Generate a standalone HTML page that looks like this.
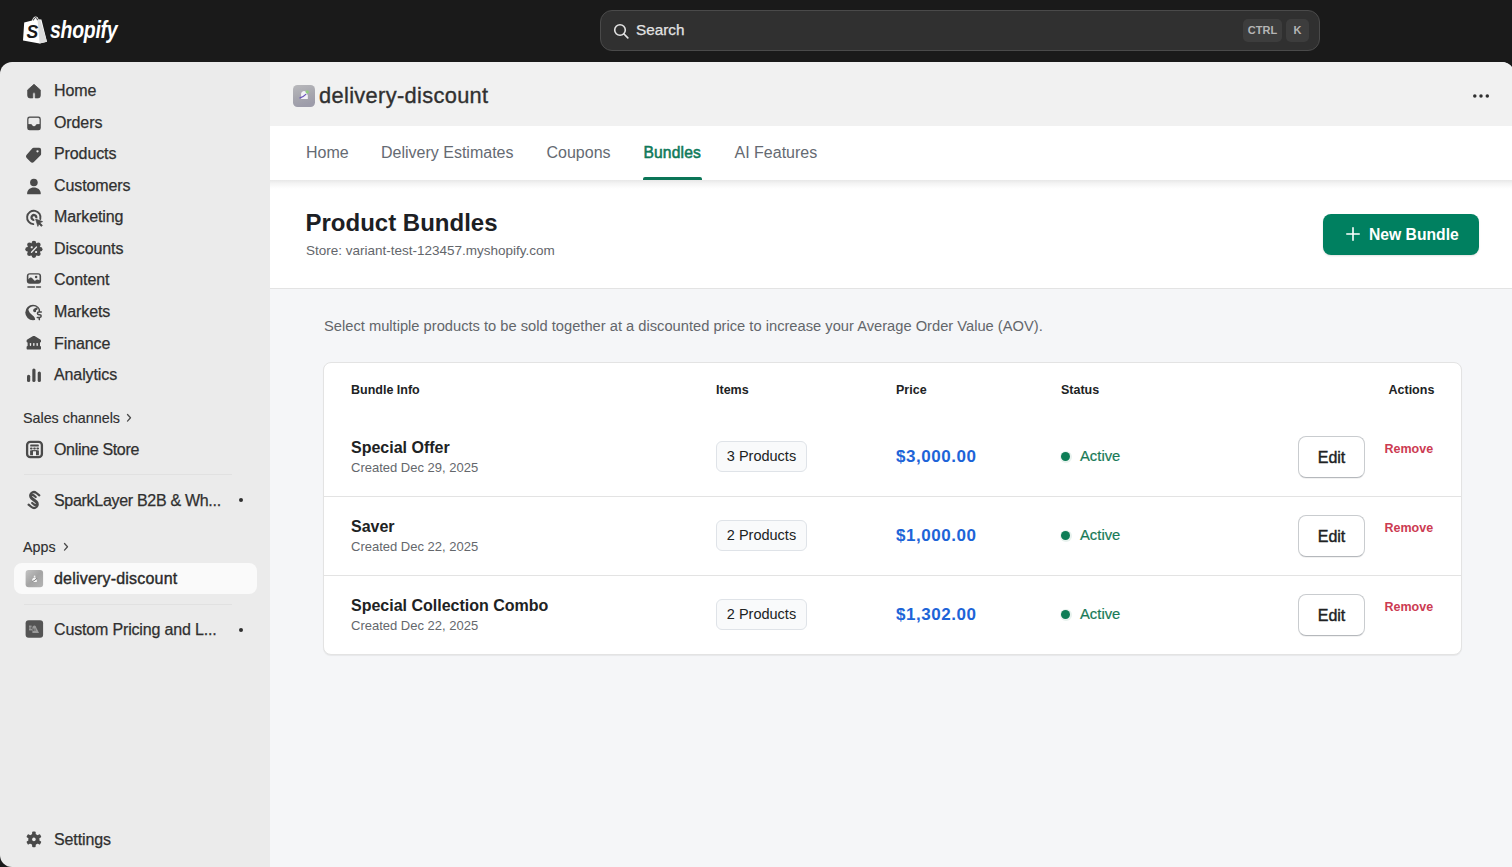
<!DOCTYPE html>
<html><head><meta charset="utf-8">
<style>
*{box-sizing:border-box;margin:0;padding:0}
html,body{width:1512px;height:867px;overflow:hidden;background:#1a1a1a;font-family:"Liberation Sans",sans-serif;}
.a{position:absolute;white-space:nowrap;line-height:1}
#search{position:absolute;left:600px;top:10px;width:720px;height:41px;background:#303030;border:1px solid #4a4a4a;border-radius:12px}
.kbd{position:absolute;top:8px;height:23px;background:#3d3d3d;border-radius:5px;color:#b5b5b5;font-size:11px;font-weight:bold;line-height:23px;text-align:center}
#side{position:absolute;left:0;top:62px;width:270px;height:805px;background:#ebebeb;border-radius:12px 0 0 12px}
#main{position:absolute;left:270px;top:62px;width:1244px;height:805px;background:#f5f6f8;border-radius:0 12px 0 0;overflow:hidden}
.nt{position:absolute;left:54px;color:#303030;font-size:16px;letter-spacing:-0.1px;line-height:1;-webkit-text-stroke:0.25px #303030;white-space:nowrap}
.ni{position:absolute;left:24px;width:20px;height:20px}
.th{position:absolute;color:#202223;font-size:12.5px;font-weight:bold;line-height:1;white-space:nowrap}
.ttl{position:absolute;left:351px;color:#202223;font-size:16px;font-weight:bold;line-height:1;white-space:nowrap}
.crt{position:absolute;left:351px;color:#64676c;font-size:13px;line-height:1;white-space:nowrap}
.badge{position:absolute;left:716px;width:91px;height:31px;border:1px solid #dfe3e8;background:#f9fafb;border-radius:6px;color:#202223;font-size:14.5px;line-height:29px;text-align:center}
.price{position:absolute;left:896px;color:#1d64d8;font-size:17px;letter-spacing:0.55px;font-weight:bold;line-height:1;white-space:nowrap}
.dot{position:absolute;left:1059.5px;width:12px;height:12px;border-radius:50%;background:#e8f2ee}
.dot::after{content:"";position:absolute;left:1.5px;top:1.5px;width:9px;height:9px;border-radius:50%;background:#0d7d56}
.act{position:absolute;left:1080px;color:#187a57;font-size:14.8px;-webkit-text-stroke:0.2px #187a57;line-height:1;white-space:nowrap}
.edit{position:absolute;left:1298px;width:67px;height:42px;border:1px solid #c9cccf;border-bottom-color:#b5b8bc;border-radius:8px;background:#fff;color:#202223;font-size:16px;-webkit-text-stroke:0.4px #202223;line-height:41px;text-align:center;box-shadow:0 1px 0 rgba(0,0,0,0.05)}
.rm{position:absolute;left:1384.5px;color:#cc3b52;font-size:12.5px;font-weight:bold;line-height:1;white-space:nowrap}
.tab{top:144.7px;color:#656a72;font-size:16px}
.sep{position:absolute;left:324px;width:1137px;height:1px;background:#e3e3e3}
</style></head><body>
<!-- TOP BAR -->
<svg class="a" style="left:22px;top:16px" width="26" height="28" viewBox="0 0 26 28">
  <path d="M2.2 6.6 L10 4.6 C10.8 1.8 12.2 0.6 13.6 0.6 C15.2 0.6 16.2 1.8 16.6 3.6 L19.4 3.4 L25 25.8 L17.6 27.4 L1 24.6 Z" fill="#fff"/>
  <path d="M18.2 3.5 L25 25.8 L17.6 27.4 L15.6 4.4 Z" fill="#dcdcdc"/>
  <path d="M11.4 4.4 C12 2.4 12.8 1.6 13.6 1.6 C14.6 1.6 15.2 2.6 15.4 4.2" stroke="#1a1a1a" stroke-width="1" fill="none"/>
  <text x="4.6" y="22" font-family="Liberation Sans" font-weight="bold" font-style="italic" font-size="17.5" fill="#1a1a1a">S</text>
</svg>
<div class="a" style="left:50px;top:19px;color:#fff;font-size:19.5px;font-weight:bold;font-style:italic;letter-spacing:-0.3px;transform:scale(1,1.2);transform-origin:0 0">shopify</div>
<div id="search">
  <svg class="a" style="left:12px;top:12px" width="17" height="17" viewBox="0 0 17 17"><circle cx="7" cy="7" r="5.3" stroke="#e3e3e3" stroke-width="1.6" fill="none"/><path d="M11 11 L14.8 14.8" stroke="#e3e3e3" stroke-width="1.7" stroke-linecap="round"/></svg>
  <div class="a" style="left:35px;top:11.4px;color:#e3e3e3;font-size:15.3px;-webkit-text-stroke:0.25px #e3e3e3">Search</div>
  <div class="kbd" style="left:642px;width:39px">CTRL</div>
  <div class="kbd" style="left:685px;width:23px">K</div>
</div>

<!-- SIDEBAR -->
<div id="side"></div>
<div id="sidecontent">
<!-- Home -->
<svg class="ni" style="top:80.5px" viewBox="0 0 20 20"><path d="M10 3.3 L16.3 8.9 V14.7 A2.2 2.2 0 0 1 14.1 16.9 H11.2 V12.8 A1.2 1.2 0 0 0 8.8 12.8 V16.9 H5.9 A2.2 2.2 0 0 1 3.7 14.7 V8.9 Z" fill="#4a4a4a" stroke="#4a4a4a" stroke-width="0.8" stroke-linejoin="round"/></svg>
<div class="nt" style="top:82.5px">Home</div>
<!-- Orders -->
<svg class="ni" style="top:112.5px" viewBox="0 0 20 20"><path d="M5.6 3.5 H14.4 A2.4 2.4 0 0 1 16.8 5.9 V14.9 A2.4 2.4 0 0 1 14.4 17.3 H5.6 A2.4 2.4 0 0 1 3.2 14.9 V5.9 A2.4 2.4 0 0 1 5.6 3.5 Z" fill="#4a4a4a"/><path d="M6 4.9 H14 A1.4 1.4 0 0 1 15.4 6.3 V10.9 H12.6 L10.9 13 H9.1 L7.4 10.9 H4.6 V6.3 A1.4 1.4 0 0 1 6 4.9 Z" fill="#ebebeb" stroke="#ebebeb" stroke-width="0.3" stroke-linejoin="round"/></svg>
<div class="nt" style="top:114.5px">Orders</div>
<!-- Products -->
<svg class="ni" style="top:143.5px" viewBox="0 0 20 20"><path d="M9.6 3.8 H15.2 A1.9 1.9 0 0 1 17.1 5.7 V10.1 C17.1 10.6 16.9 11 16.6 11.3 L10.1 17.7 A2.6 2.6 0 0 1 6.4 17.7 L2.9 14.2 A2.6 2.6 0 0 1 2.9 10.5 L8.4 4.3 C8.7 4 9.1 3.8 9.6 3.8 Z" fill="#4a4a4a"/><circle cx="13.5" cy="7.3" r="1.15" fill="#ebebeb"/></svg>
<div class="nt" style="top:145.5px">Products</div>
<!-- Customers -->
<svg class="ni" style="top:175.5px" viewBox="0 0 20 20"><circle cx="9.9" cy="6.5" r="3.8" fill="#4a4a4a"/><path d="M3.1 17.4 C3.3 13.8 6.1 11.6 9.9 11.6 C13.7 11.6 16.5 13.8 16.8 17.4 C16.8 18 16.5 18.3 16 18.3 H3.9 C3.4 18.3 3.1 18 3.1 17.4 Z" fill="#4a4a4a"/></svg>
<div class="nt" style="top:177.5px">Customers</div>
<!-- Marketing -->
<svg class="ni" style="top:206.5px" viewBox="0 0 20 20"><path d="M16.3 12.1 A6.7 6.7 0 1 0 9.3 17.1" stroke="#4a4a4a" stroke-width="1.9" fill="none" stroke-linecap="round"/><path d="M12.2 11.2 A2.4 2.4 0 1 0 10.3 12.8" stroke="#4a4a4a" stroke-width="2.3" fill="none"/><path d="M11.6 12.1 L18.6 14.6 L15.9 15.8 L18.4 18.3 L17.3 19.4 L14.8 16.9 L13.9 19.4 Z" fill="#4a4a4a" stroke="#4a4a4a" stroke-width="0.7" stroke-linejoin="round"/></svg>
<div class="nt" style="top:208.5px">Marketing</div>
<!-- Discounts -->
<svg class="ni" style="top:238.5px" viewBox="0 0 20 20"><g fill="#4a4a4a"><circle cx="9.9" cy="10.3" r="6.6"/><circle cx="9.9" cy="4.0" r="2.3"/><circle cx="9.9" cy="16.6" r="2.3"/><circle cx="3.6" cy="10.3" r="2.3"/><circle cx="16.2" cy="10.3" r="2.3"/><circle cx="5.45" cy="5.85" r="2.3"/><circle cx="14.35" cy="5.85" r="2.3"/><circle cx="5.45" cy="14.75" r="2.3"/><circle cx="14.35" cy="14.75" r="2.3"/></g><path d="M7.5 13.2 L12.5 8" stroke="#ebebeb" stroke-width="1.35" stroke-linecap="round"/><rect x="6.7" y="7.3" width="2" height="2" rx="0.6" fill="#ebebeb"/><rect x="11.1" y="11.9" width="2" height="2" rx="0.6" fill="#ebebeb"/></svg>
<div class="nt" style="top:240.5px">Discounts</div>
<!-- Content -->
<svg class="ni" style="top:269.5px" viewBox="0 0 20 20"><rect x="3.6" y="4" width="12.7" height="9" rx="2.2" fill="#4a4a4a" stroke="#4a4a4a" stroke-width="1.6"/><path d="M4.4 9.6 C5.2 8.2 6 7.6 6.9 7.6 C8 7.6 9 9.2 10.4 10.6 C11 11.1 11.5 10.6 12 10 C12.6 9.4 13.5 9.2 15.5 10.2 V5.8 A1.4 1.4 0 0 0 14.1 4.4 H5.8 A1.4 1.4 0 0 0 4.4 5.8 Z" fill="#ebebeb"/><circle cx="12.1" cy="7.1" r="1.25" fill="#4a4a4a"/><path d="M3.9 17 H10.5 M12.5 17 H16.5" stroke="#4a4a4a" stroke-width="1.4" stroke-linecap="round"/></svg>
<div class="nt" style="top:271.5px">Content</div>
<!-- Markets -->
<svg class="ni" style="top:301.5px" viewBox="0 0 20 20"><circle cx="9" cy="10.5" r="7.7" fill="#4a4a4a"/><path d="M4.3 7.8 C5.2 5.8 7.2 4.4 9.8 4.3 C11.8 4.3 13.3 5.2 14.3 6.7 L15.1 9.3 L12.6 17.2 C12 17.8 11.4 17.9 11.1 17.4 C10.9 16.4 10.6 15.4 9.6 14.3 C8.6 13.2 6.6 11.8 5.6 10.4 Z" fill="#ebebeb"/><path d="M9.4 7.6 C10 6.6 11.6 5.6 13.6 5.3 C13.8 6.8 13.2 8.6 12.2 9.7 C11.4 10.4 10 10.2 9.4 9.6 C9 9.1 9.1 8.2 9.4 7.6 Z" fill="#4a4a4a"/><path d="M12.2 8 H20 V20 H11 Z" fill="#ebebeb"/><path d="M17.3 10 H14.8 a1.35 1.35 0 0 0 0 2.7 H15.8 a1.35 1.35 0 0 1 0 2.7 H13.3 M15.3 8.3 V10 M15.3 15.4 V17.6" stroke="#4a4a4a" stroke-width="1.55" fill="none" stroke-linecap="round"/></svg>
<div class="nt" style="top:303.5px">Markets</div>
<!-- Finance -->
<svg class="ni" style="top:333.5px" viewBox="0 0 20 20"><path d="M9.1 2.1 C9.6 1.8 10.1 1.8 10.6 2.1 L16.3 5.6 C16.8 5.9 17 6.3 17 6.8 V7.8 C17 8.3 16.6 8.6 16 8.6 V12 C16.6 12.1 17 12.5 17 13 V14.6 C17 15.2 16.6 15.6 16 15.6 H3.6 C3 15.6 2.6 15.2 2.6 14.6 V13 C2.6 12.5 3 12.1 3.6 12 V8.6 C3 8.6 2.6 8.3 2.6 7.8 V6.8 C2.6 6.3 2.8 5.9 3.3 5.6 Z" fill="#4a4a4a"/><rect x="5.8" y="8.9" width="1.35" height="3" rx="0.6" fill="#ebebeb"/><rect x="9.15" y="8.9" width="1.35" height="3" rx="0.6" fill="#ebebeb"/><rect x="12.5" y="8.9" width="1.35" height="3" rx="0.6" fill="#ebebeb"/></svg>
<div class="nt" style="top:335.5px">Finance</div>
<!-- Analytics -->
<svg class="ni" style="top:364.5px" viewBox="0 0 20 20"><rect x="3" y="9.7" width="3.2" height="7.4" rx="1.6" fill="#4a4a4a"/><rect x="8.3" y="3.5" width="3.2" height="13.6" rx="1.6" fill="#4a4a4a"/><rect x="13.7" y="6.5" width="3.2" height="10.6" rx="1.6" fill="#4a4a4a"/></svg>
<div class="nt" style="top:366.5px">Analytics</div>

<!-- Sales channels -->
<div class="a" style="left:23px;top:410.5px;color:#303030;font-size:14.3px;-webkit-text-stroke:0.15px #303030">Sales channels</div>
<svg class="a" style="left:125px;top:412px" width="8" height="12" viewBox="0 0 8 12"><path d="M2.5 2.5 L5.5 5.8 L2.5 9.1" stroke="#4a4a4a" stroke-width="1.3" fill="none" stroke-linecap="round" stroke-linejoin="round"/></svg>
<!-- Online Store -->
<svg class="ni" style="top:438.5px" viewBox="0 0 20 20"><rect x="3.1" y="2.9" width="14.8" height="15.2" rx="3.2" fill="none" stroke="#4a4a4a" stroke-width="2.3"/><rect x="6.2" y="5.5" width="8.6" height="2" rx="0.6" fill="#4a4a4a"/><rect x="6" y="8.4" width="2.6" height="2.1" rx="0.9" fill="#4a4a4a"/><rect x="9.2" y="8.4" width="2.6" height="2.1" rx="0.9" fill="#4a4a4a"/><rect x="12.4" y="8.4" width="2.6" height="2.1" rx="0.9" fill="#4a4a4a"/><path d="M6.1 11.6 L9 11.1 V16.2 H6.1 Z M12 11.1 L14.9 11.6 V16.2 H12 Z" fill="#4a4a4a"/><rect x="9" y="11.1" width="3" height="1.2" fill="#4a4a4a"/></svg>
<div class="nt" style="top:441.5px;letter-spacing:-0.33px">Online Store</div>
<div class="a" style="left:24px;top:474px;width:208px;height:1px;background:#e1e1e1"></div>
<!-- SparkLayer -->
<svg class="ni" style="top:489.5px" viewBox="0 0 20 20"><path d="M15.3 5.4 L12.4 3 C10.9 1.8 8.6 1.9 7.2 3.3 C5.8 4.7 5.8 7 7.3 8.3 L12.3 12.4 C13 13 13 14 12.4 14.6 C11.8 15.2 10.8 15.2 10.2 14.7 L8.2 13" stroke="#4a4a4a" stroke-width="2.2" fill="none" stroke-linecap="round" stroke-linejoin="round"/><path d="M4.6 14.6 L7.5 17 C9 18.2 11.3 18.1 12.7 16.7 C14.1 15.3 14.1 13 12.6 11.7 L7.6 7.6 C6.9 7 6.9 6 7.5 5.4 C8.1 4.8 9.1 4.8 9.7 5.3 L11.7 7" stroke="#4a4a4a" stroke-width="2.2" fill="none" stroke-linecap="round" stroke-linejoin="round"/></svg>
<div class="nt" style="top:492.5px;letter-spacing:-0.3px">SparkLayer B2B &amp; Wh...</div>
<div class="a" style="left:239px;top:498px;width:4px;height:4px;border-radius:50%;background:#303030"></div>

<!-- Apps -->
<div class="a" style="left:23px;top:540px;color:#303030;font-size:14.3px;-webkit-text-stroke:0.15px #303030">Apps</div>
<svg class="a" style="left:62px;top:541px" width="8" height="12" viewBox="0 0 8 12"><path d="M2.5 2.5 L5.5 5.8 L2.5 9.1" stroke="#4a4a4a" stroke-width="1.3" fill="none" stroke-linecap="round" stroke-linejoin="round"/></svg>
<div class="a" style="left:14px;top:563px;width:243px;height:31px;background:#fafafa;border-radius:8px"></div>
<svg class="ni" style="top:568.5px" viewBox="0 0 20 20"><defs><linearGradient id="g1" x1="0" y1="0" x2="1" y2="1"><stop offset="0" stop-color="#c4c4c4"/><stop offset="0.5" stop-color="#a4a4a4"/><stop offset="1" stop-color="#b4b4b4"/></linearGradient></defs><rect x="1.6" y="1.1" width="17.5" height="17.2" rx="3" fill="url(#g1)"/><path d="M8 10.8 C8.6 9.2 9.8 8.2 11.2 8.2 L12.8 11.3 L12.8 13 H8.2 Z" fill="#f7f7f7"/><path d="M8.2 12.4 C9.8 12 11.2 11.2 12.6 9.6" stroke="#444" stroke-width="0.8" fill="none"/><circle cx="10.6" cy="7.3" r="0.9" fill="#eee"/></svg>
<div class="nt" style="top:570.5px;color:#2a2a2a;-webkit-text-stroke:0.4px #2a2a2a;letter-spacing:0.2px">delivery-discount</div>
<div class="a" style="left:24px;top:604px;width:208px;height:1px;background:#e1e1e1"></div>
<!-- Custom Pricing -->
<svg class="ni" style="top:619px" viewBox="0 0 20 20"><rect x="1.6" y="1.2" width="17.5" height="17.6" rx="3" fill="#545454"/><path d="M5 7.2 H7.6 M5 9 H7.4 M5 10.8 H8" stroke="#bdbdbd" stroke-width="0.9"/><path d="M8.4 13.5 V8.6 C8.4 7.4 9.2 6.4 10.4 6.4 C11.6 6.4 12.2 7.4 12.2 8.6 L14.3 12.4 L15 13.9 H8.4 Z" fill="#9a9a9a"/><path d="M9.4 9.5 V12 M11 9.5 V12" stroke="#545454" stroke-width="0.8"/></svg>
<div class="nt" style="top:622px;letter-spacing:-0.16px">Custom Pricing and L...</div>
<div class="a" style="left:239px;top:628px;width:4px;height:4px;border-radius:50%;background:#303030"></div>

<!-- Settings -->
<svg class="ni" style="top:828.5px" viewBox="0 0 20 20"><g fill="#4a4a4a" transform="translate(9.9 10.4)"><circle r="5.6"/><rect x="-1.8" y="-7.8" width="3.6" height="4" rx="1"/><rect x="-1.8" y="3.8" width="3.6" height="4" rx="1"/><rect x="-1.8" y="-7.8" width="3.6" height="4" rx="1" transform="rotate(60)"/><rect x="-1.8" y="-7.8" width="3.6" height="4" rx="1" transform="rotate(120)"/><rect x="-1.8" y="-7.8" width="3.6" height="4" rx="1" transform="rotate(240)"/><rect x="-1.8" y="-7.8" width="3.6" height="4" rx="1" transform="rotate(300)"/></g><circle cx="9.9" cy="10.4" r="1.8" fill="#ebebeb"/></svg>
<div class="nt" style="top:831.5px">Settings</div>
</div>


<!-- MAIN -->
<div id="main">
  <div class="a" style="left:0;top:0;width:1244px;height:64px;background:#f1f1f1"></div>
  <div class="a" style="left:0;top:64px;width:1244px;height:54px;background:#fff"></div>
  <div class="a" style="left:0;top:118px;width:1244px;height:109px;background:#fff;border-bottom:1px solid #e3e3e3"></div>
  <div class="a" style="left:0;top:118px;width:1244px;height:9px;background:linear-gradient(#e8e8e8,#f4f4f4 40%,#fcfcfc 80%,#fff)"></div>
</div>
<div id="maincontent">
<!-- app header -->
<svg class="a" style="left:293px;top:85px" width="22" height="22" viewBox="0 0 22 22"><defs><linearGradient id="g2" x1="0" y1="0" x2="0.3" y2="1"><stop offset="0" stop-color="#b9b9bc"/><stop offset="0.6" stop-color="#a6a6ae"/><stop offset="1" stop-color="#9d9caa"/></linearGradient></defs><rect x="0" y="0" width="22" height="22" rx="4.5" fill="url(#g2)"/><path d="M8 8.8 C8.6 7 9.6 6.1 11 6.1 C12.4 6.1 13.6 7.6 14.8 10.4 V13.9 H8.2 Z" fill="#f3f3f7"/><path d="M7 12.9 C9 12.4 11 11.3 12.8 9.4" stroke="#6a56b8" stroke-width="1.3" fill="none" stroke-linecap="round"/><circle cx="14.2" cy="6.9" r="1.6" fill="#8fcf7e"/></svg>
<div class="a" style="left:319px;top:84.6px;color:#303030;font-size:21.8px;letter-spacing:0.35px;-webkit-text-stroke:0.35px #303030">delivery-discount</div>
<svg class="a" style="left:1471px;top:93px" width="20" height="6" viewBox="0 0 20 6"><circle cx="3.8" cy="3" r="1.75" fill="#303030"/><circle cx="10" cy="3" r="1.75" fill="#303030"/><circle cx="16.3" cy="3" r="1.75" fill="#303030"/></svg>

<!-- tabs -->
<div class="a tab" style="left:306px">Home</div>
<div class="a tab" style="left:381px">Delivery Estimates</div>
<div class="a tab" style="left:546.5px">Coupons</div>
<div class="a tab" style="left:643.5px;color:#0f7a5a;font-size:15.6px;letter-spacing:0.15px;-webkit-text-stroke:0.55px #0f7a5a;top:145px">Bundles</div>
<div class="a tab" style="left:734.5px">AI Features</div>
<div class="a" style="left:643px;top:177px;width:59px;height:3px;background:#0b7557;border-radius:2px 2px 0 0"></div>

<!-- page header -->
<div class="a" style="left:305.5px;top:211px;color:#1c2024;font-size:24px;font-weight:bold">Product Bundles</div>
<div class="a" style="left:306px;top:244.4px;color:#63666b;font-size:13.5px">Store: variant-test-123457.myshopify.com</div>
<div class="a" style="left:1323px;top:214px;width:156px;height:41px;background:#008060;border-radius:8px;box-shadow:0 1px 2px rgba(0,0,0,0.12)"></div>
<svg class="a" style="left:1346px;top:227px" width="14" height="14" viewBox="0 0 14 14"><path d="M7 0.8 V13.2 M0.8 7 H13.2" stroke="#fff" stroke-width="1.6" stroke-linecap="round"/></svg>
<div class="a" style="left:1369px;top:226.7px;color:#fff;font-size:15.7px;font-weight:bold">New Bundle</div>

<!-- description -->
<div class="a" style="left:324px;top:319px;color:#63666b;font-size:14.7px">Select multiple products to be sold together at a discounted price to increase your Average Order Value (AOV).</div>

<!-- card -->
<div class="a" style="left:323px;top:362px;width:1139px;height:293px;background:#fff;border:1px solid #e3e3e3;border-radius:8px;box-shadow:0 1px 1px rgba(0,0,0,0.06)"></div>
<div class="th" style="left:351px;top:383.5px">Bundle Info</div>
<div class="th" style="left:716px;top:383.5px">Items</div>
<div class="th" style="left:896px;top:383.5px">Price</div>
<div class="th" style="left:1061px;top:383.5px">Status</div>
<div class="th" style="left:1388.5px;top:383.5px">Actions</div>

<div class="sep" style="top:496px"></div>
<div class="sep" style="top:575px"></div>

<!-- row1 -->
<div class="ttl" style="top:440.4px">Special Offer</div>
<div class="crt" style="top:460.8px">Created Dec 29, 2025</div>
<div class="badge" style="top:441px">3 Products</div>
<div class="price" style="top:448.3px">$3,000.00</div>
<div class="dot" style="top:450.5px"></div>
<div class="act" style="top:449px">Active</div>
<div class="edit" style="top:436px">Edit</div>
<div class="rm" style="top:443.2px">Remove</div>
<!-- row2 -->
<div class="ttl" style="top:519.4px">Saver</div>
<div class="crt" style="top:539.8px">Created Dec 22, 2025</div>
<div class="badge" style="top:520px">2 Products</div>
<div class="price" style="top:527.3px">$1,000.00</div>
<div class="dot" style="top:529.5px"></div>
<div class="act" style="top:528px">Active</div>
<div class="edit" style="top:515px">Edit</div>
<div class="rm" style="top:522.2px">Remove</div>
<!-- row3 -->
<div class="ttl" style="top:598.4px">Special Collection Combo</div>
<div class="crt" style="top:618.8px">Created Dec 22, 2025</div>
<div class="badge" style="top:599px">2 Products</div>
<div class="price" style="top:606.3px">$1,302.00</div>
<div class="dot" style="top:608.5px"></div>
<div class="act" style="top:607px">Active</div>
<div class="edit" style="top:594px">Edit</div>
<div class="rm" style="top:601.2px">Remove</div>
</div>

</body></html>
